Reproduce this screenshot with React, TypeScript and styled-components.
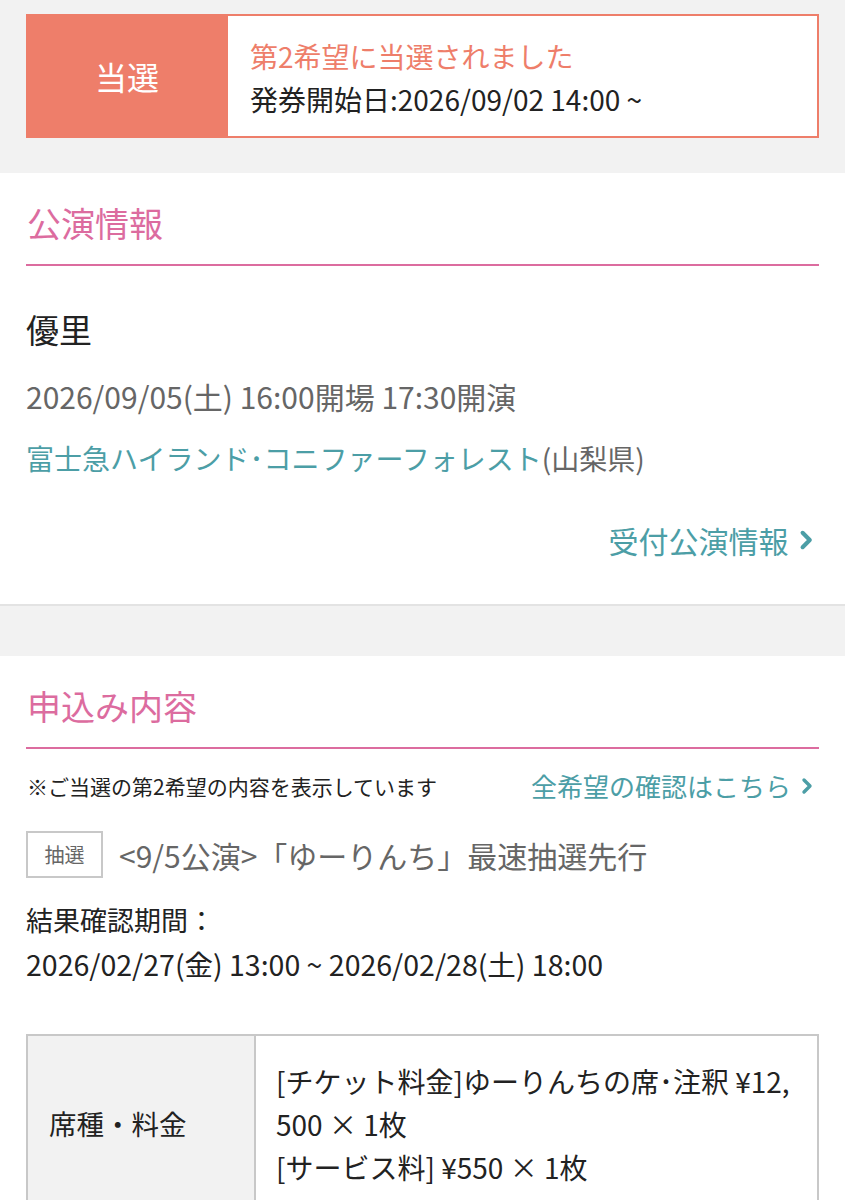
import styled, { createGlobalStyle } from 'styled-components';

const GlobalStyle = createGlobalStyle`
  html, body {
    margin: 0;
    padding: 0;
    background: #f2f2f2;
    font-family: 'Noto Sans CJK JP', 'Noto Sans', sans-serif;
    color: #222;
  }
`;

const salmon = '#ee7e6a';
const pink = '#dc6c9f';
const teal = '#4c9ea6';

const Page = styled.div`
  width: 845px;
  background: #f2f2f2;
`;

const Top = styled.div`
  padding: 14px 26px 35px;
`;

const Banner = styled.div`
  display: flex;
  height: 124px;
  box-sizing: border-box;
  border: 2px solid ${salmon};
  background: #fff;
`;

const BannerLabel = styled.div`
  width: 202px;
  margin: -2px 0 -2px -2px;
  background: ${salmon};
  color: #fff;
  font-size: 32px;
  display: flex;
  align-items: center;
  justify-content: center;
`;

const BannerBody = styled.div`
  flex: 1;
  display: flex;
  flex-direction: column;
  justify-content: center;
  padding-left: 22px;
  padding-top: 2px;
  gap: 7px;
`;

const BannerTitle = styled.div`
  color: ${salmon};
  font-size: 28px;
  line-height: 36px;
`;

const BannerText = styled.div`
  color: #222;
  font-size: 28px;
  line-height: 36px;
`;

const Section = styled.section<{ $last?: boolean }>`
  background: #fff;
  padding: 28px 26px ${(p) => (p.$last ? '0' : '44px')};
  border-bottom: ${(p) => (p.$last ? 'none' : '2px solid #e3e3e3')};
  margin-bottom: ${(p) => (p.$last ? '0' : '50px')};
`;

const Heading = styled.h2`
  margin: 0;
  color: ${pink};
  font-size: 34px;
  font-weight: 400;
  line-height: 44px;
  padding: 0 1px 19px;
  border-bottom: 2px solid ${pink};
`;

const Artist = styled.div`
  font-size: 33px;
  line-height: 44px;
  margin-top: 41px;
  color: #222;
`;

const DateLine = styled.div`
  font-size: 30px;
  line-height: 40px;
  margin-top: 25px;
  color: #666;
`;

const Venue = styled.div`
  font-size: 28px;
  line-height: 40px;
  margin-top: 22px;
  color: #666;
`;

const Link = styled.a`
  color: ${teal};
  text-decoration: none;
`;

const RightLink = styled.div`
  display: flex;
  justify-content: flex-end;
  margin-top: 42px;
`;

const LinkRow = styled.a<{ $size: number }>`
  display: inline-flex;
  align-items: center;
  gap: 10px;
  color: ${teal};
  font-size: ${(p) => p.$size}px;
  line-height: 40px;
  text-decoration: none;
  padding-right: 6px;
`;

const NoteRow = styled.div`
  display: flex;
  justify-content: space-between;
  align-items: center;
  margin-top: 17px;
`;

const Note = styled.div`
  font-size: 21px;
  color: #222;
  padding-left: 1px;
`;

const TitleRow = styled.div`
  display: flex;
  align-items: center;
  gap: 16px;
  margin-top: 25px;
`;

const Badge = styled.span`
  box-sizing: border-box;
  width: 77px;
  height: 47px;
  border: 2px solid #c8c8c8;
  color: #666;
  font-size: 20px;
  display: flex;
  align-items: center;
  justify-content: center;
`;

const LotteryTitle = styled.div`
  font-size: 30px;
  color: #666;
`;

const PeriodLabel = styled.div`
  font-size: 27px;
  line-height: 44px;
  margin-top: 20px;
  color: #222;
`;

const Period = styled.div`
  font-size: 28.5px;
  line-height: 44px;
  color: #222;
`;

const Table = styled.table`
  width: 100%;
  margin-top: 48px;
  border-collapse: collapse;
  border: 2px solid #c8c8c8;
`;

const Th = styled.th`
  width: 205px;
  background: #f2f2f2;
  border-right: 2px solid #c8c8c8;
  text-align: left;
  font-weight: 400;
  font-size: 27.5px;
  color: #222;
  padding: 0 0 0 21px;
`;

const Td = styled.td`
  padding: 24px 20px 20px 20px;
  font-size: 28px;
  line-height: 43px;
  color: #222;
`;

const Chevron = ({ size }: { size: number }) => (
  <svg width={size * 0.6} height={size} viewBox="0 0 12 20" fill="none">
    <polyline points="3,4 9,10 3,16" stroke={teal} strokeWidth="3.4" strokeLinecap="round" strokeLinejoin="round" />
  </svg>
);

export default function App() {
  return (
    <Page>
      <GlobalStyle />
      <Top>
        <Banner>
          <BannerLabel>当選</BannerLabel>
          <BannerBody>
            <BannerTitle>第2希望に当選されました</BannerTitle>
            <BannerText>発券開始日:2026/09/02 14:00 ~</BannerText>
          </BannerBody>
        </Banner>
      </Top>

      <Section>
        <Heading>公演情報</Heading>
        <Artist>優里</Artist>
        <DateLine>2026/09/05(土) 16:00開場 17:30開演</DateLine>
        <Venue>
          <Link href="#">富士急ハイランド･コニファーフォレスト</Link>(山梨県)
        </Venue>
        <RightLink>
          <LinkRow href="#" $size={30}>
            受付公演情報
            <Chevron size={24} />
          </LinkRow>
        </RightLink>
      </Section>

      <Section $last>
        <Heading>申込み内容</Heading>
        <NoteRow>
          <Note>※ご当選の第2希望の内容を表示しています</Note>
          <LinkRow href="#" $size={26}>
            全希望の確認はこちら
            <Chevron size={20} />
          </LinkRow>
        </NoteRow>
        <TitleRow>
          <Badge>抽選</Badge>
          <LotteryTitle>&lt;9/5公演&gt;「ゆーりんち」最速抽選先行</LotteryTitle>
        </TitleRow>
        <PeriodLabel>結果確認期間：</PeriodLabel>
        <Period>2026/02/27(金) 13:00 ~ 2026/02/28(土) 18:00</Period>
        <Table>
          <tbody>
            <tr>
              <Th>席種・料金</Th>
              <Td>
                [チケット料金]ゆーりんちの席･注釈 ¥12,
                <br />
                500 × 1枚
                <br />
                [サービス料] ¥550 × 1枚
              </Td>
            </tr>
          </tbody>
        </Table>
      </Section>
    </Page>
  );
}
